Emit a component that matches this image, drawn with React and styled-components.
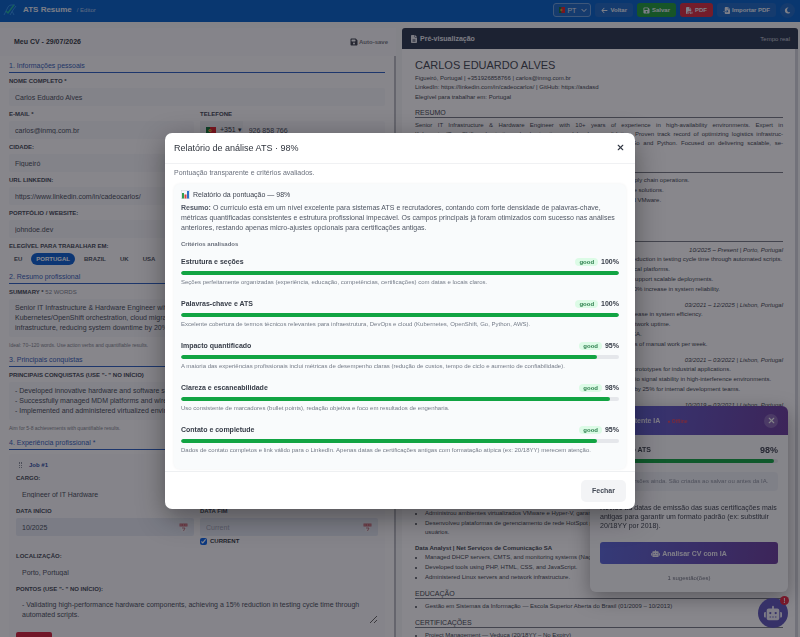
import React from 'react';
import styled, { createGlobalStyle, css } from 'styled-components';
import { X } from 'lucide-react';
import {
  FaArrowLeft,
  FaFloppyDisk,
  FaFilePdf,
  FaFileImport,
  FaMoon,
  FaChevronDown,
  FaFileLines,
  FaRobot,
} from 'react-icons/fa6';

const GlobalStyle = createGlobalStyle`
*{ box-sizing:border-box; }
body{
margin:0;
background:#f4f5f7;
color:#343945;
font-family:"Liberation Sans", Arial, sans-serif;
font-size:7px;
overflow:hidden;
}
button, input, select, textarea{
font-family:inherit;
color:inherit;
margin:0;
}
h1, h2, h3, p, ul{ margin:0; padding:0; }
`;

const Page = styled.div`
display:flex;
flex-direction:column;
height:100vh;
overflow:hidden;
`;

/* top bar */

const TopBar = styled.header`
display:flex;
align-items:center;
flex:none;
height:22px;
padding:0 5px 2px 3px;
background:#0560c8;
color:#e4ebf5;
`;

const Brand = styled.h1`
margin-left:5px;
font-size:8px;
line-height:10px;
`;

const Crumb = styled.span`
flex:1;
margin-left:5px;
font-size:6px;
color:#a9c4e8;
`;

const Actions = styled.div`
display:flex;
align-items:center;
gap:4px;
`;

const BarButton = styled.button`
display:flex;
align-items:center;
gap:2px;
height:14px;
padding:0 6px;
border:0;
border-radius:3px;
background:${(p) => p.$bg || '#1c68c4'};
color:#e8eef7;
font-size:6px;
font-weight:700;
white-space:nowrap;
svg{ width:7px; height:7px; }
`;

const RoundButton = styled(BarButton)`
justify-content:center;
width:15px;
height:15px;
padding:0;
border-radius:50%;
`;

const LangBox = styled.label`
display:flex;
align-items:center;
gap:2px;
width:38px;
height:14px;
padding:0 3px 0 5px;
border:1px solid #6c9fdc;
border-radius:3px;
background:#1c68c4;
svg{ width:6px; height:6px; flex:none; }
`;

const LangSelect = styled.select`
flex:1;
min-width:0;
padding:0;
border:0;
appearance:none;
background:transparent;
font-size:7px;
`;

/* form side */

const Columns = styled.main`
display:grid;
grid-template-columns:1fr 1fr;
gap:6px;
flex:1;
min-height:0;
padding-right:2px;
`;

const EditorSide = styled.section`
display:flex;
flex-direction:column;
min-width:0;
min-height:0;
padding-top:6px;
`;

const DocBar = styled.div`
display:flex;
align-items:center;
justify-content:space-between;
flex:none;
height:28px;
padding:0 8px 0 14px;
background:#f8f8fb;
font-weight:700;
line-height:8px;
`;

const AutoSave = styled.span`
display:flex;
align-items:center;
gap:1px;
font-size:6px;
color:#777b85;
svg{ width:8px; height:8px; color:#3d4250; }
`;

const Form = styled.form`
flex:1;
min-height:0;
overflow:hidden;
padding:4px 9px 0;
border-right:2px solid #b9bbc2;
background:#fbfbfd;
`;

const FormTitle = styled.h2`
margin-bottom:4px;
border-bottom:1px solid #2b5fc0;
color:#3460b8;
font-size:7px;
font-weight:400;
line-height:12px;
`;

const Pair = styled.div`
display:grid;
grid-template-columns:1fr 1fr;
gap:6px;
`;

const FieldBox = styled.div`
display:flex;
flex-direction:column;
gap:3px;
margin-bottom:${(p) => (p.$tight ? '1px' : '4px')};
`;

const FieldLabel = styled.label`
height:8px;
font-size:6px;
font-weight:700;
line-height:8px;
text-transform:uppercase;
color:#434856;
span{ font-weight:400; color:#7b818d; }
`;

const inputLook = css`
width:100%;
padding:4px 6px;
border:0;
border-radius:2px;
background:${(p) => (p.$tone === 'plain' ? 'transparent' : '#f4f5f9')};
color:#474d5b;
font-size:7px;
line-height:10px;
`;

const TextInput = styled.input`
${inputLook}
height:18px;
&::placeholder{ color:#a3a9b8; }
`;

const TextBox = styled.textarea`
${inputLook}
display:block;
resize:${(p) => (p.$grip ? 'vertical' : 'none')};
overflow:hidden;
white-space:pre;
`;

const InputRow = styled.div`
display:flex;
align-items:center;
height:18px;
padding-right:6px;
border-radius:2px;
background:${(p) => (p.$date ? '#e3e8f2' : '#f4f5f9')};
svg{ flex:none; }
`;

const DialCode = styled.button`
display:flex;
align-items:center;
gap:4px;
height:18px;
padding:0 1px 0 6px;
border:0;
background:#eceef3;
font-size:7px;
white-space:nowrap;
`;

const Pills = styled.div`
display:flex;
align-items:center;
gap:4px;
margin-bottom:2px;
`;

const Pill = styled.button`
height:12px;
padding:0 5px;
border:0;
border-radius:6px;
background:${(p) => (p.$on ? '#0b5fd0' : 'transparent')};
color:${(p) => (p.$on ? '#ffffff' : '#4d5360')};
font-size:6px;
font-weight:700;
`;

const Hint = styled.p`
margin:4px 0 5px;
color:#80848e;
font-size:5px;
line-height:8px;
`;

const JobCard = styled.div`
padding:6px 7px;
border-radius:4px;
background:#f8f8fb;
`;

const JobHead = styled.div`
display:flex;
align-items:center;
gap:7px;
margin-bottom:4px;
padding-left:3px;
font-size:6px;
font-weight:700;
line-height:10px;
color:#2f4fa4;
i{ width:3px; height:6px; border:dotted #8a8f9c; border-width:0 1px; }
`;

const CheckLine = styled.label`
display:flex;
align-items:center;
gap:3px;
height:8px;
margin-bottom:7px;
font-size:6px;
font-weight:700;
input{ width:7px; height:7px; accent-color:#0a64e8; }
`;

const RemoveButton = styled.button`
display:block;
height:14px;
margin-top:8px;
padding:0 5px;
border:0;
border-radius:2px;
background:#d3213c;
color:#fff;
font-size:6px;
font-weight:700;
`;

/* preview side */

const PreviewSide = styled.section`
display:flex;
flex-direction:column;
min-width:0;
min-height:0;
padding-top:6px;
`;

const PreviewBar = styled.div`
display:flex;
align-items:center;
gap:2px;
flex:none;
height:21px;
padding:0 8px;
border-radius:3px 3px 0 0;
background:#2a3750;
color:#e3e6ec;
font-weight:700;
svg{ width:8px; height:8px; }
span{ flex:1; }
small{ font-size:6px; font-weight:400; color:#c3c9d4; }
`;

const Paper = styled.article`
flex:1;
min-height:0;
overflow:hidden;
padding:10px 12px 0 13px;
border-right:3px solid #d3d5dc;
background:#fdfdff;
color:#424752;
font-size:6px;
line-height:9px;
`;

const PersonName = styled.h2`
margin-bottom:2px;
font-size:11px;
font-weight:400;
line-height:13px;
`;

const Eligible = styled.p`
margin-top:1px;
`;

const PaperTitle = styled.h3`
margin:6px 0 3px;
border-bottom:1px solid #777b85;
font-size:7px;
font-weight:400;
line-height:9px;
text-transform:uppercase;
`;

const Justified = styled.p`
span{ display:block; text-align-last:justify; white-space:nowrap; }
`;

const Bullets = styled.ul`
padding-left:10px;
li{ padding-bottom:1px; white-space:pre; }
`;

const Job = styled.div`
& + &{ margin-top:5px; }
`;

const JobTitle = styled.div`
display:flex;
justify-content:space-between;
line-height:10px;
`;

/* assistant */

const Assistant = styled.aside`
position:fixed;
right:12px;
bottom:45px;
width:198px;
border-radius:6px;
overflow:hidden;
background:#f8f9fc;
box-shadow:0 6px 20px rgba(0,0,0,.35);
`;

const AssistantHead = styled.div`
display:flex;
align-items:center;
gap:7px;
height:29px;
padding:0 10px;
background:linear-gradient(100deg, #5a67d8, #6a3d9c);
color:#e6e4f2;
font-weight:700;
svg{ width:9px; height:9px; }
small{ flex:1; font-size:5px; color:#e0455e; }
`;

const AssistantClose = styled.button`
display:flex;
align-items:center;
justify-content:center;
width:14px;
height:14px;
padding:0;
border:0;
border-radius:50%;
background:rgba(255,255,255,.2);
color:#f2f2f8;
`;

const AssistantBody = styled.div`
padding:9px 10px;
color:#3e4450;
line-height:9px;
`;

const ScoreLine = styled.div`
display:flex;
align-items:center;
justify-content:space-between;
margin-bottom:3px;
font-weight:700;
line-height:12px;
b{ font-size:9px; }
`;

const Notice = styled.p`
margin:9px 0 12px;
padding:5px 6px;
border-radius:4px;
background:#eceff5;
color:#8b92a0;
font-size:6px;
white-space:nowrap;
`;

const Analyse = styled.button`
display:flex;
align-items:center;
justify-content:center;
gap:2px;
width:100%;
height:22px;
margin:12px 0 10px;
border:0;
border-radius:3px;
background:linear-gradient(100deg, #5a67d8, #6a3d9c);
color:#eceaf6;
font-size:7px;
font-weight:700;
svg{ width:9px; height:9px; }
`;

const Count = styled.p`
text-align:center;
color:#6f7480;
font-size:6px;
`;

const Fab = styled.button`
position:fixed;
right:12px;
bottom:9px;
display:flex;
align-items:center;
justify-content:center;
width:30px;
height:30px;
padding:0;
border:0;
border-radius:50%;
background:#5c55b8;
color:#e9e8f3;
svg{ width:18px; height:18px; }
span{
position:absolute;
top:-2px;
right:-1px;
width:9px;
height:9px;
border-radius:50%;
background:#dc2440;
font-size:7px;
font-weight:700;
line-height:9px;
}
`;

/* modal */

const Overlay = styled.div`
position:fixed;
inset:0;
display:flex;
align-items:center;
justify-content:center;
padding:4px 16px 0;
background:rgba(14,12,20,.49);
`;

const Dialog = styled.div`
display:flex;
flex-direction:column;
width:100%;
max-width:470px;
border-radius:7px;
overflow:hidden;
background:#fff;
box-shadow:0 8px 28px rgba(0,0,0,.4);
`;

const DialogHead = styled.div`
display:flex;
align-items:center;
justify-content:space-between;
height:31px;
padding:0 10px 0 9px;
border-bottom:1px solid #f0f1f3;
h2{ font-size:9px; font-weight:400; line-height:12px; color:#2f343d; }
`;

const CloseButton = styled.button`
display:flex;
padding:0;
border:0;
background:transparent;
`;

const DialogBody = styled.div`
padding:4px 9px 2px;
`;

const Lead = styled.p`
margin-bottom:6px;
color:#6b717d;
line-height:10px;
`;

const Report = styled.div`
padding:6px 7px 2px;
border-radius:6px;
background:#f9fbfc;
box-shadow:0 0 3px rgba(30,40,60,.07);
color:#4f5663;
line-height:10px;
`;

const ReportTitle = styled.h3`
display:flex;
align-items:center;
gap:3px;
margin-bottom:3px;
font-size:7px;
font-weight:400;
color:#3d434f;
svg{ width:9px; height:9px; }
`;

const SubTitle = styled.h3`
margin:6px 0 8px;
font-size:6px;
line-height:10px;
color:#6b717d;
`;

const Criterion = styled.div`
height:42px;
`;

const CriterionTop = styled.div`
display:flex;
align-items:center;
gap:3px;
margin-bottom:4px;
color:#363c47;
font-weight:700;
span{ flex:1; }
`;

const Good = styled.em`
padding:0 4px;
border-radius:4px;
background:#dcfbe6;
color:#2c7f4c;
font-size:6px;
font-style:normal;
line-height:8px;
`;

const Track = styled.div`
height:4px;
border-radius:2px;
overflow:hidden;
background:#e5e7eb;
div{ height:100%; border-radius:2px; background:#12a443; }
`;

const Note = styled.p`
margin-top:2px;
color:#757c88;
font-size:6px;
`;

const DialogFoot = styled.div`
display:flex;
justify-content:flex-end;
padding:8px 9px 7px;
border-top:1px solid #eef0f2;
`;

const Dismiss = styled.button`
height:22px;
padding:0 11px;
border:0;
border-radius:5px;
background:#f3f4f6;
color:#434955;
font-size:7px;
font-weight:700;
`;

const Logo = () => (
  <svg width="15" height="14" viewBox="0 0 15 14" fill="none" strokeWidth="1">
    <path d="M1 12 L5 4 Q6 2 8 2 H12 M7 12 L10 7 L13 3 M9 8 L11 12" stroke="#2f8fe8" />
    <path d="M3 8 L5 10 L11 2" stroke="#1fb5a0" strokeWidth="1.4" />
  </svg>
);

const Flag = ({ w = 10, h = 7 }) => (
  <svg width={w} height={h} viewBox="0 0 10 7" preserveAspectRatio="none">
    <rect width="10" height="7" fill="#e0202c" />
    <rect width="4" height="7" fill="#12733a" />
    <circle cx="4" cy="3.5" r="1.6" fill="#e8c63a" />
    <circle cx="4" cy="3.5" r=".8" fill="#d8343e" />
  </svg>
);

const Chart = () => (
  <svg viewBox="0 0 18 18">
    <rect x=".5" y=".5" width="17" height="17" fill="#f3f6f9" stroke="#cdd5de" />
    <rect x="2" y="6" width="4" height="11" fill="#2f9e4f" />
    <rect x="7" y="9" width="4" height="8" fill="#d8433b" />
    <rect x="12" y="2" width="4" height="15" fill="#2c6fc9" />
  </svg>
);

const Calendar = () => (
  <svg width="9" height="9" viewBox="0 0 18 18">
    <path d="M1 1 H17 V7 H1 Z" fill="#c96a78" />
    <path d="M4 3 V5 M9 3 V5 M14 3 V5" stroke="#fff" />
    <path d="M4 8 H14 V17 H4 Z" fill="#eceff4" />
    <path d="M6 10 H12 L9 16" stroke="#b0596a" strokeWidth="1.5" fill="none" />
  </svg>
);

const Field = ({ id, label, tone, ...rest }) => (
  <FieldBox>
    <FieldLabel htmlFor={id}>{label}</FieldLabel>
    <TextInput id={id} $tone={tone} {...rest} />
  </FieldBox>
);

const summary = `Senior IT Infrastructure & Hardware Engineer with 10+ years
Kubernetes/OpenShift orchestration, cloud migration and Go
infrastructure, reducing system downtime by 20%, and logistics`;

const wins = `- Developed innovative hardware and software solutions
- Successfully managed MDM platforms and wireless networks
- Implemented and administered virtualized environments`;

const points = `- Validating high-performance hardware components, achieving a 15% reduction in testing cycle time through
automated scripts.`;

const achievements = [
  'Developed innovative hardware and software solutions for retail and global supply chain operations.',
  'Successfully managed MDM platforms and wireless, core network infrastructure solutions.',
  'Implemented and administered virtualized server environments on Hyper-V and VMware.',
  'Automated deployments with Python and Go.',
  'Led migrations to cloud platforms.',
];

const jobs = [
  {
    title: 'Engineer of IT Hardware',
    when: '10/2025 – Present | Porto, Portugal',
    items: [
      'Validating several high-performance hardware components, achieving a 15% reduction in testing cycle time through automated scripts.',
      'Managed and scaled Kubernetes, OpenShift clusters for high availability of critical platforms.',
      'Designed, tested and delivered infrastructure pipelines with Go and Python to support scalable deployments.',
      'Steadily improved monitoring and alerting of hardware platforms, achieving a 10% increase in system reliability.',
    ],
  },
  {
    title: 'Infrastructure Engineer',
    when: '03/2021 – 12/2025 | Lisbon, Portugal',
    items: [
      'Optimized servers, data storage and network resources, resulting in a 20% increase in system efficiency.',
      'Monitored wireless and wired networks across all company sites with 99.9% network uptime.',
      'Managed MDM platforms for all mobile devices of the full company across EMEA.',
      'Automated server provisioning and asset reporting with Python, saving 10 hours of manual work per week.',
    ],
  },
  {
    title: 'Hardware Engineer',
    when: '03/2021 – 03/2022 | Lisbon, Portugal',
    items: [
      'Designed, assembled and built embedded hardware and customized software prototypes for industrial applications.',
      'Tested and tuned radio modules, antennas and wireless devices, improving radio signal stability in high-interference environments.',
      'Reduced the time needed to build, test, validate and release new tool versions by 25% for internal development teams.',
    ],
  },
  {
    title: 'Support Engineer',
    when: '10/2019 – 03/2021 | Lisbon, Portugal',
    items: ['Supported users and systems.', 'Maintained servers.'],
  },
  {
    title: 'Network Analyst',
    items: ['Managed networks.', 'Configured routers.', 'Documented systems.'],
  },
  {
    title: 'Analista de Sistemas',
    items: [
      'Implantou servidores e serviços\nde rede para equipes.',
      'Administrou ambientes virtualizados VMware e Hyper-V, garantindo disponibilidade.',
      'Desenvolveu plataformas de gerenciamento de rede HotSpot para milhares de\nusuários.',
    ],
  },
  {
    title: 'Data Analyst | Net Serviços de Comunicação SA',
    items: [
      'Managed DHCP servers, CMTS, and monitoring systems (Nagios).',
      'Developed tools using PHP, HTML, CSS, and JavaScript.',
      'Administered Linux servers and network infrastructure.',
    ],
  },
];

const criteria = [
  ['Estrutura e seções', 100, 'Seções perfeitamente organizadas (experiência, educação, competências, certificações) com datas e locais claros.'],
  ['Palavras-chave e ATS', 100, 'Excelente cobertura de termos técnicos relevantes para infraestrutura, DevOps e cloud (Kubernetes, OpenShift, Go, Python, AWS).'],
  ['Impacto quantificado', 95, 'A maioria das experiências profissionais inclui métricas de desempenho claras (redução de custos, tempo de ciclo e aumento de confiabilidade).'],
  ['Clareza e escaneabilidade', 98, 'Uso consistente de marcadores (bullet points), redação objetiva e foco em resultados de engenharia.'],
  ['Contato e completude', 95, 'Dados de contato completos e link válido para o LinkedIn. Apenas datas de certificações antigas com formatação atípica (ex: 20/18YY) merecem atenção.'],
];

const Header = () => (
  <TopBar>
    <Logo />
    <Brand>ATS Resume</Brand>
    <Crumb>/ Editor</Crumb>
    <Actions>
      <LangBox>
        <Flag />
        <LangSelect aria-label="Idioma" defaultValue="PT">
          <option>PT</option>
          <option>EN</option>
        </LangSelect>
        <FaChevronDown />
      </LangBox>
      <BarButton><FaArrowLeft />Voltar</BarButton>
      <BarButton $bg="#209c3c"><FaFloppyDisk />Salvar</BarButton>
      <BarButton $bg="#d62c40"><FaFilePdf />PDF</BarButton>
      <BarButton><FaFileImport />Importar PDF</BarButton>
      <RoundButton aria-label="Tema"><FaMoon /></RoundButton>
    </Actions>
  </TopBar>
);

const Editor = () => (
  <EditorSide>
    <DocBar>
      Meu CV - 29/07/2026
      <AutoSave><FaFloppyDisk />Auto-save</AutoSave>
    </DocBar>
    <Form>
      <FormTitle>1. Informações pessoais</FormTitle>
      <Field id="name" label="Nome completo *" defaultValue="Carlos Eduardo Alves" />
      <Pair>
        <Field id="mail" label="E-mail *" defaultValue="carlos@inmg.com.br" />
        <FieldBox>
          <FieldLabel htmlFor="phone">Telefone</FieldLabel>
          <InputRow>
            <DialCode type="button"><Flag />+351 ▾</DialCode>
            <TextInput id="phone" $tone="plain" defaultValue="926 858 766" />
          </InputRow>
        </FieldBox>
      </Pair>
      <Field id="city" label="Cidade:" defaultValue="Figueiró" />
      <Field id="linkedin" label="URL LinkedIn:" defaultValue="https://www.linkedin.com/in/cadeocarlos/" />
      <Field id="site" label="Portfólio / Website:" defaultValue="johndoe.dev" />
      <FieldBox>
        <FieldLabel as="div">Elegível para trabalhar em:</FieldLabel>
        <Pills>
          <Pill type="button">EU</Pill>
          <Pill type="button" $on>PORTUGAL</Pill>
          <Pill type="button">BRAZIL</Pill>
          <Pill type="button">UK</Pill>
          <Pill type="button">USA</Pill>
        </Pills>
      </FieldBox>

      <FormTitle>2. Resumo profissional</FormTitle>
      <FieldBox>
        <FieldLabel htmlFor="summary">Summary * <span>52 words</span></FieldLabel>
        <TextBox id="summary" rows={3} defaultValue={summary} />
      </FieldBox>
      <Hint>Ideal: 70–120 words. Use action verbs and quantifiable results.</Hint>

      <FormTitle>3. Principais conquistas</FormTitle>
      <FieldBox>
        <FieldLabel htmlFor="wins">Principais conquistas (use "- " no início)</FieldLabel>
        <TextBox id="wins" rows={3} defaultValue={wins} />
      </FieldBox>
      <Hint>Aim for 5-8 achievements with quantifiable results.</Hint>

      <FormTitle>4. Experiência profissional *</FormTitle>
      <JobCard>
        <JobHead><i />Job #1</JobHead>
        <Field id="role" label="Cargo:" tone="plain" defaultValue="Engineer of IT Hardware" />
        <Pair>
          <FieldBox>
            <FieldLabel htmlFor="from">Data início</FieldLabel>
            <InputRow $date>
              <TextInput id="from" $tone="plain" defaultValue="10/2025" />
              <Calendar />
            </InputRow>
          </FieldBox>
          <div>
            <FieldBox $tight>
              <FieldLabel htmlFor="to">Data fim</FieldLabel>
              <InputRow $date>
                <TextInput id="to" $tone="plain" placeholder="Current" />
                <Calendar />
              </InputRow>
            </FieldBox>
            <CheckLine><input type="checkbox" defaultChecked />CURRENT</CheckLine>
          </div>
        </Pair>
        <Field id="place" label="Localização:" tone="plain" defaultValue="Porto, Portugal" />
        <FieldBox>
          <FieldLabel htmlFor="points">Pontos (use "- " no início):</FieldLabel>
          <TextBox id="points" rows={2} $tone="plain" $grip defaultValue={points} />
        </FieldBox>
        <RemoveButton type="button">Remover</RemoveButton>
      </JobCard>
    </Form>
  </EditorSide>
);

const Preview = () => (
  <PreviewSide>
    <PreviewBar>
      <FaFileLines />
      <span>Pré-visualização</span>
      <small>Tempo real</small>
    </PreviewBar>
    <Paper>
      <PersonName>CARLOS EDUARDO ALVES</PersonName>
      <p>Figueiró, Portugal | +351926858766 | carlos@inmg.com.br</p>
      <p>LinkedIn: https://linkedin.com/in/cadeocarlos/ | GitHub: https://asdasd</p>
      <Eligible>Elegível para trabalhar em: Portugal</Eligible>
      <PaperTitle>Resumo</PaperTitle>
      <Justified>
        <span>Senior IT Infrastructure &amp; Hardware Engineer with 10+ years of experience in high-availability environments. Expert in</span>
        <span>Kubernetes/OpenShift orchestration, cloud migration, and hardware validation. Proven track record of optimizing logistics infrastruc-</span>
        <span>ture, reducing system downtime by 20%, and automating workflows using Go and Python. Focused on delivering scalable, se-</span>
        cure solutions.
      </Justified>
      <PaperTitle>Principais conquistas</PaperTitle>
      <Bullets>
        {achievements.map((item) => <li key={item}>{item}</li>)}
      </Bullets>
      <PaperTitle>Experiência</PaperTitle>
      {jobs.map((job) => (
        <Job key={job.title}>
          <JobTitle><b>{job.title}</b>{job.when && <em>{job.when}</em>}</JobTitle>
          <Bullets>
            {job.items.map((item) => <li key={item}>{item}</li>)}
          </Bullets>
        </Job>
      ))}
      <PaperTitle>Educação</PaperTitle>
      <Bullets>
        <li>Gestão em Sistemas da Informação — Escola Superior Aberta do Brasil (01/2009 – 10/2013)</li>
      </Bullets>
      <PaperTitle>Certificações</PaperTitle>
      <Bullets>
        <li>Project Management — Veduca (20/18YY – No Expiry)</li>
      </Bullets>
    </Paper>
  </PreviewSide>
);

const AiPanel = () => (
  <>
    <Assistant>
      <AssistantHead>
        <FaRobot />
        <span>Assistente IA</span>
        <small>● Offline</small>
        <AssistantClose aria-label="Fechar assistente"><X strokeWidth={3} /></AssistantClose>
      </AssistantHead>
      <AssistantBody>
        <ScoreLine><span>Pontuação ATS</span><b>98%</b></ScoreLine>
        <Track><div style={{ width: '98%' }} /></Track>
        <Notice>Sem as versões ainda. São criadas ao salvar ou antes da IA.</Notice>
        <p><b>Revise as</b> datas de emissão das suas certificações mais antigas para garantir um formato padrão (ex: substituir 20/18YY por 2018).</p>
        <Analyse><FaRobot />Analisar CV com IA</Analyse>
        <Count>1 sugestão(ões)</Count>
      </AssistantBody>
    </Assistant>
    <Fab aria-label="Assistente IA"><FaRobot /><span>!</span></Fab>
  </>
);

const ReportDialog = () => (
  <Overlay>
    <Dialog role="dialog" aria-labelledby="report-title">
      <DialogHead>
        <h2 id="report-title">Relatório de análise ATS · 98%</h2>
        <CloseButton aria-label="Fechar"><X size={9} strokeWidth={3} /></CloseButton>
      </DialogHead>
      <DialogBody>
        <Lead>Pontuação transparente e critérios avaliados.</Lead>
        <Report>
          <ReportTitle><Chart />Relatório da pontuação — 98%</ReportTitle>
          <p>
            <b>Resumo:</b> O currículo está em um nível excelente para sistemas ATS e recrutadores, contando com forte densidade de palavras-chave, métricas quantificadas consistentes e estrutura profissional impecável. Os campos principais já foram otimizados com sucesso nas análises anteriores, restando apenas micro-ajustes opcionais para certificações antigas.
          </p>
          <SubTitle>Critérios analisados</SubTitle>
          {criteria.map(([name, score, note]) => (
            <Criterion key={name}>
              <CriterionTop><span>{name}</span><Good>good</Good>{score}%</CriterionTop>
              <Track><div style={{ width: `${score}%` }} /></Track>
              <Note>{note}</Note>
            </Criterion>
          ))}
        </Report>
      </DialogBody>
      <DialogFoot><Dismiss>Fechar</Dismiss></DialogFoot>
    </Dialog>
  </Overlay>
);

const App = () => (
  <Page>
    <GlobalStyle />
    <Header />
    <Columns>
      <Editor />
      <Preview />
    </Columns>
    <AiPanel />
    <ReportDialog />
  </Page>
);

export default App;
